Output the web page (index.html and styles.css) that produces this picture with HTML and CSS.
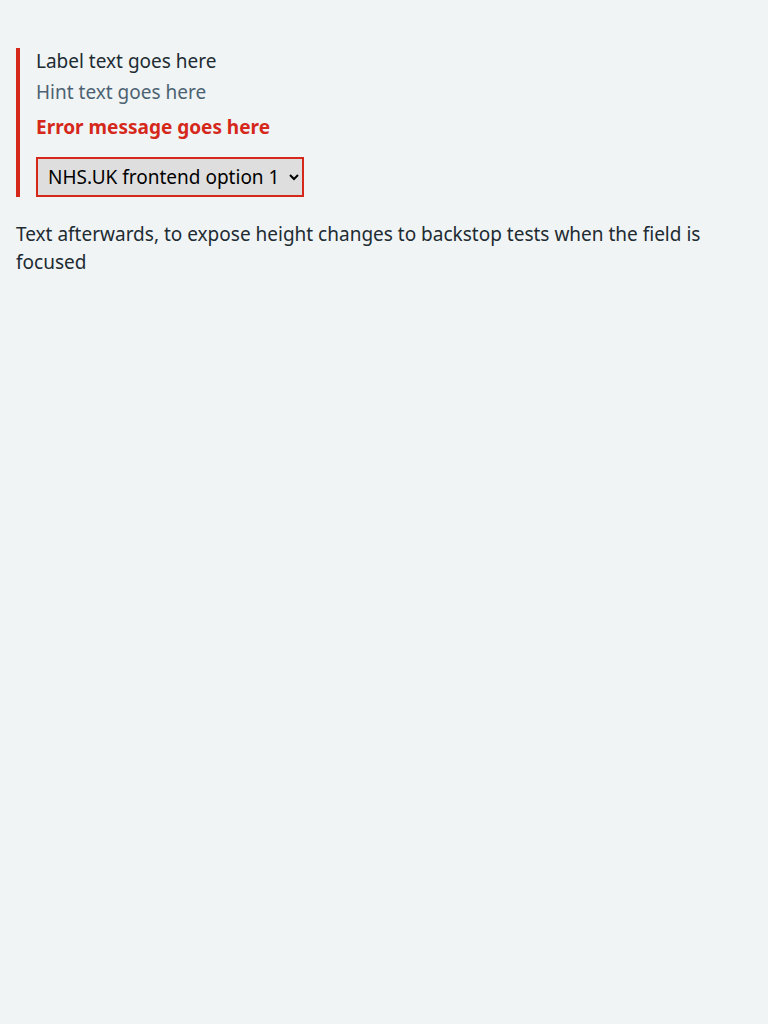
FILE: index.html
```html
<!DOCTYPE html>
<html lang="en">
<head>
<meta charset="utf-8">
<title>Select with error</title>
<link rel="stylesheet" href="styles.css">
</head>
<body>
<main class="page">
  <div class="form-group form-group--error">
    <label class="label" for="select-1">Label text goes here</label>
    <div class="hint">Hint text goes here</div>
    <span class="error-message">Error message goes here</span>
    <select class="select select--error" id="select-1">
      <option>NHS.UK frontend option 1</option>
      <option>NHS.UK frontend option 2</option>
      <option>NHS.UK frontend option 3</option>
    </select>
  </div>
  <p class="body-text">Text afterwards, to expose height changes to backstop tests when the field is focused</p>
</main>
</body>
</html>
```

FILE: styles.css
```css
html, body {
  margin: 0;
  padding: 0;
  background: #f0f4f5;
}
body {
  font-family: "Noto Sans", "Open Sans", sans-serif;
  font-size: 19px;
  line-height: 28px;
  color: #212b32;
}
.page {
  padding: 48px 16px 16px;
}
.form-group {
  display: flex;
  flex-direction: column;
  align-items: flex-start;
}
.form-group--error {
  border-left: 4px solid #d5281b;
  padding-left: 16px;
}
.label {
  display: block;
  margin-top: -1px;
  margin-bottom: 3px;
}
.hint {
  color: #4c6272;
  margin-bottom: 7px;
}
.error-message {
  color: #d5281b;
  font-weight: 700;
  margin-bottom: 16px;
}
.select {
  font-family: inherit;
  font-size: 19px;
  color: #000;
  height: 40px;
  box-sizing: border-box;
  border: 2px solid #4c6272;
  border-radius: 0;
  padding: 0 6px;
  background-color: #dedede;
  width: 268px;
}
.select--error {
  border-color: #d5281b;
}
.body-text {
  margin: 23px 0 0;
}
```
